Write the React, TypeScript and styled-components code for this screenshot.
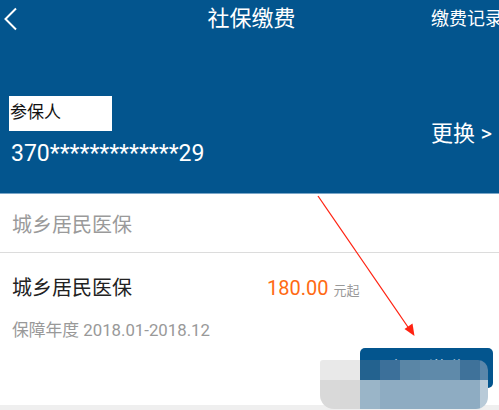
import styled, { createGlobalStyle } from 'styled-components'

const GlobalStyle = createGlobalStyle`
    html, body {
        margin: 0;
        padding: 0;
        background: #fff;
    }
    body {
        font-family: Roboto, "Noto Sans CJK SC", sans-serif;
    }
`

const mosaic = [
    ['#e9e9e9', '#e8e8e8', '#23628f', '#3c709a', '#5a86a6', '#5f8aaa', '#5f8aaa', '#3f729a', '#5a86aa'],
    ['#d9d9d9', '#d8d8d8', '#9ab5c8', '#8eacc2', '#8eacc2', '#8eacc2', '#8eacc2', '#8eacc2', '#b8cad8'],
]

export default function App() {
    return (
        <Page>
            <GlobalStyle />
            <Header>
                <NavBar>
                    <BackButton>
                        <svg width="22" height="38" viewBox="0 0 22 38">
                            <polyline points="16,8.5 5.5,19 16,29.5" fill="none" stroke="#fff" strokeWidth="2" />
                        </svg>
                    </BackButton>
                    <Title>社保缴费</Title>
                    <NavLink>缴费记录</NavLink>
                </NavBar>
                <PersonRow>
                    <div>
                        <LabelBox>参保人</LabelBox>
                        <IdNumber>370*************29</IdNumber>
                    </div>
                    <ChangeLink>更换 &gt;</ChangeLink>
                </PersonRow>
            </Header>

            <SectionTitle>城乡居民医保</SectionTitle>

            <Card>
                <CardTop>
                    <CardTitle>城乡居民医保</CardTitle>
                    <Price>
                        180.00<Unit>元起</Unit>
                    </Price>
                </CardTop>
                <Period>保障年度 2018.01-2018.12</Period>
                <Actions>
                    <PayButton>立即缴费</PayButton>
                </Actions>
            </Card>
            <Footer />

            <Arrow width="499" height="410" viewBox="0 0 499 410">
                <line x1="318" y1="196" x2="410" y2="330" stroke="#f21" strokeWidth="1.3" />
                <polygon points="414.5,336 404.5,329 412.5,323.5" fill="#f21" />
            </Arrow>

            <Mosaic>
                {mosaic.map((row, r) =>
                    row.map((c, i) => <Cell key={r + '-' + i} $color={c} />)
                )}
            </Mosaic>
        </Page>
    )
}

const Page = styled.div`
    position: relative;
    width: 499px;
    height: 410px;
    overflow: hidden;
    display: flex;
    flex-direction: column;
`

const Header = styled.header`
    height: 193px;
    background: #03558e;
    border-bottom: 1px solid #7aa6c8;
    color: #fff;
`

const NavBar = styled.div`
    height: 38px;
    display: grid;
    grid-template-columns: 1fr auto 1fr;
    align-items: center;
`

const BackButton = styled.div`
    width: 22px;
    height: 38px;
`

const Title = styled.h1`
    margin: 0 0 0 4px;
    font-size: 22px;
    font-weight: 400;
    line-height: 38px;
`

const NavLink = styled.span`
    justify-self: end;
    font-size: 18px;
    line-height: 38px;
    margin-right: -4px;
    white-space: nowrap;
`

const PersonRow = styled.div`
    margin-top: 58px;
    display: flex;
    align-items: center;
    justify-content: space-between;
    padding: 0 7px 0 9px;
`

const LabelBox = styled.div`
    width: 102px;
    height: 35px;
    background: #fff;
    color: #111;
    font-size: 17px;
    line-height: 33px;
    padding-left: 1px;
`

const IdNumber = styled.div`
    margin-top: 9px;
    padding-left: 2px;
    font-size: 23px;
    line-height: 28px;
`

const ChangeLink = styled.span`
    font-size: 22px;
    line-height: 28px;
    margin-top: 4px;
`

const SectionTitle = styled.div`
    height: 58px;
    display: flex;
    align-items: center;
    padding-left: 12px;
    font-size: 20px;
    color: #9a9a9a;
    border-bottom: 1px solid #dcdcdc;
`

const Card = styled.section`
    padding: 22px 6px 17px 12px;
`

const CardTop = styled.div`
    display: grid;
    grid-template-columns: 255px auto;
    align-items: baseline;
`

const CardTitle = styled.div`
    font-size: 20px;
    line-height: 26px;
    color: #222;
`

const Price = styled.div`
    font-size: 20px;
    line-height: 26px;
    color: #ff6a13;
`

const Unit = styled.span`
    font-size: 13px;
    color: #999;
    margin-left: 5px;
`

const Period = styled.div`
    margin-top: 14px;
    font-size: 16.8px;
    line-height: 24px;
    color: #999;
`

const Actions = styled.div`
    margin-top: 6px;
    display: flex;
    justify-content: flex-end;
`

const PayButton = styled.button`
    width: 133px;
    height: 40px;
    border: none;
    border-radius: 5px;
    background: #03558e;
    color: #fff;
    font-family: Roboto, "Noto Sans CJK SC", sans-serif;
    font-size: 20px;
    padding: 0;
`

const Footer = styled.div`
    flex: 1;
    background: #efefef;
`

const Arrow = styled.svg`
    position: absolute;
    left: 0;
    top: 0;
    pointer-events: none;
`

const Mosaic = styled.div`
    position: absolute;
    left: 320px;
    top: 360px;
    width: 168px;
    height: 49px;
    display: grid;
    grid-template-columns: repeat(8, 20px) 8px;
    grid-template-rows: 20px 29px;
    border-radius: 3px 10px 12px 14px;
    overflow: hidden;
`

const Cell = styled.div<{ $color: string }>`
    background: ${p => p.$color};
`
